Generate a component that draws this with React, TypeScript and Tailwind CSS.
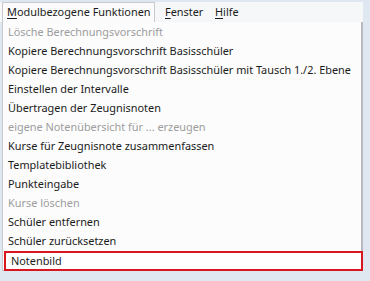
import React from 'react'

type Item = {
  label: string
  disabled?: boolean
  marked?: boolean
}

const items: Item[] = [
  { label: 'Lösche Berechnungsvorschrift', disabled: true },
  { label: 'Kopiere Berechnungsvorschrift Basisschüler' },
  { label: 'Kopiere Berechnungsvorschrift Basisschüler mit Tausch 1./2. Ebene' },
  { label: 'Einstellen der Intervalle' },
  { label: 'Übertragen der Zeugnisnoten' },
  { label: 'eigene Notenübersicht für ... erzeugen', disabled: true },
  { label: 'Kurse für Zeugnisnote zusammenfassen' },
  { label: 'Templatebibliothek' },
  { label: 'Punkteingabe' },
  { label: 'Kurse löschen', disabled: true },
  { label: 'Schüler entfernen' },
  { label: 'Schüler zurücksetzen' },
  { label: 'Notenbild', marked: true },
]

function Accel({ first, rest }: { first: string; rest: string }) {
  return (
    <span className="whitespace-nowrap">
      <span className="underline underline-offset-2">{first}</span>
      {rest}
    </span>
  )
}

export default function App() {
  return (
    <div
      className="w-[370px] h-[281px] bg-[#dfe7f0] pt-[2px] text-[10.9px] text-[#1b1b1b]"
      style={{ fontFamily: '"Noto Sans", "Open Sans", sans-serif' }}
    >
      <div className="w-[363px] h-[20px] bg-[#f6f7f9] flex items-stretch">
        <div className="ml-[2px] w-[153px] border border-b-0 border-[#c9c9cc] bg-[#fbfbfb] flex items-center pl-[4px]">
          <Accel first="M" rest="odulbezogene Funktionen" />
        </div>
        <div className="flex items-center pl-[10px] w-[60px]">
          <Accel first="F" rest="enster" />
        </div>
        <div className="flex items-center">
          <Accel first="H" rest="ilfe" />
        </div>
      </div>
      <div className="ml-[2px] w-[361px] h-[249px] bg-[#fcfcfc] border-l border-r-2 border-b border-[#c9c9cc] border-r-[#b9b9c2] pt-[1px]">
        {items.map((item) => (
          <div
            key={item.label}
            className={`h-[19px] flex items-center pl-[5px] whitespace-nowrap ${
              item.disabled ? 'text-[#9d9d9d]' : ''
            } ${item.marked ? 'ml-[1px] -mr-[2px] border-2 border-[#d9151f] pl-[4px] h-[20px] bg-white' : ''}`}
          >
            {item.label}
          </div>
        ))}
      </div>
    </div>
  )
}
